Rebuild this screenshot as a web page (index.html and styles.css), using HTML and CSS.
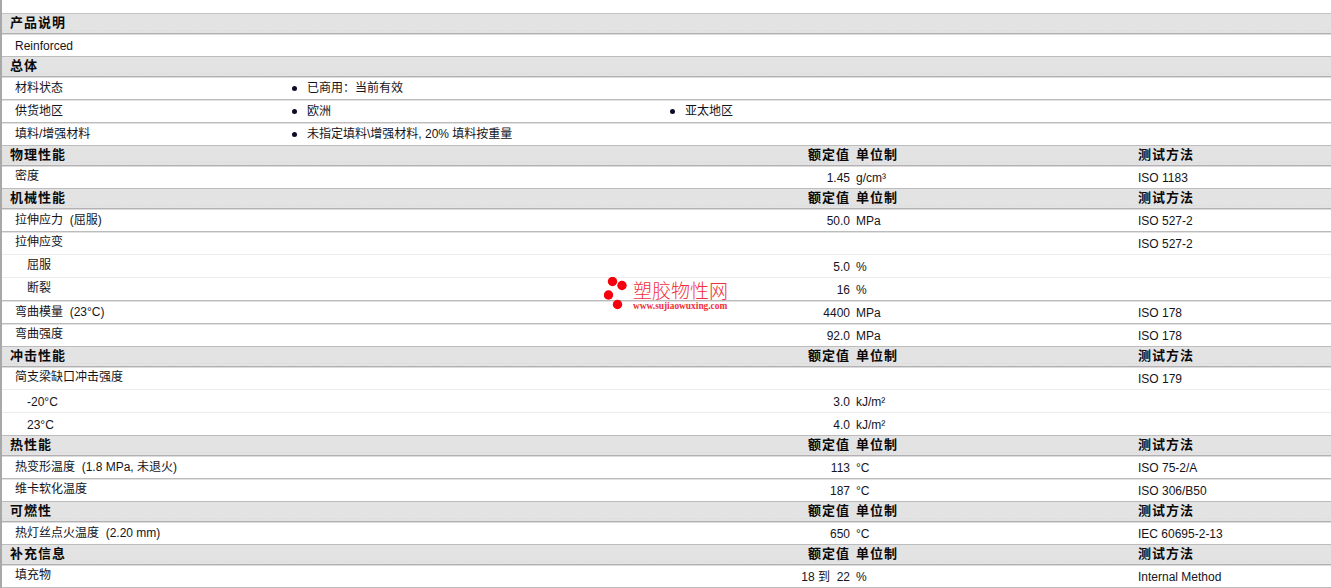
FILE: index.html
```html
<!DOCTYPE html>
<html lang="zh">
<head>
<meta charset="utf-8">
<title>产品说明</title>
<link rel="stylesheet" href="styles.css">
</head>
<body>
<div class="sheet">
  <div class="head"><b>产品说明</b></div>
  <div class="row"><span class="name num">Reinforced</span></div>
  <div class="head"><b>总体</b></div>
  <div class="row list"><span class="name mix">材料状态</span><span class="item">已商用：当前有效</span></div>
  <div class="row list"><span class="name mix">供货地区</span><span class="item">欧洲</span><span class="item">亚太地区</span></div>
  <div class="row list"><span class="name mix">填料/增强材料</span><span class="item">未指定填料\增强材料, 20% 填料按重量</span></div>

  <div class="head cols"><b>物理性能</b><b class="val">额定值</b><b class="unit">单位制</b><b>测试方法</b></div>
  <div class="row cols"><span class="name">密度</span><span class="val">1.45</span><span class="unit">g/cm³</span><span>ISO 1183</span></div>

  <div class="head cols"><b>机械性能</b><b class="val">额定值</b><b class="unit">单位制</b><b>测试方法</b></div>
  <div class="row cols"><span class="name mix">拉伸应力&nbsp; (屈服)</span><span class="val">50.0</span><span class="unit">MPa</span><span>ISO 527-2</span></div>
  <div class="row cols light"><span class="name">拉伸应变</span><span class="val"></span><span class="unit"></span><span>ISO 527-2</span></div>
  <div class="row cols light"><span class="name sub">屈服</span><span class="val">5.0</span><span class="unit">%</span><span></span></div>
  <div class="row cols"><span class="name sub">断裂</span><span class="val">16</span><span class="unit">%</span><span></span></div>
  <div class="row cols"><span class="name mix">弯曲模量&nbsp; (23°C)</span><span class="val">4400</span><span class="unit">MPa</span><span>ISO 178</span></div>
  <div class="row cols"><span class="name">弯曲强度</span><span class="val">92.0</span><span class="unit">MPa</span><span>ISO 178</span></div>

  <div class="head cols"><b>冲击性能</b><b class="val">额定值</b><b class="unit">单位制</b><b>测试方法</b></div>
  <div class="row cols light"><span class="name">简支梁缺口冲击强度</span><span class="val"></span><span class="unit"></span><span>ISO 179</span></div>
  <div class="row cols light"><span class="name sub num">-20°C</span><span class="val">3.0</span><span class="unit">kJ/m²</span><span></span></div>
  <div class="row cols"><span class="name sub num">23°C</span><span class="val">4.0</span><span class="unit">kJ/m²</span><span></span></div>

  <div class="head cols"><b>热性能</b><b class="val">额定值</b><b class="unit">单位制</b><b>测试方法</b></div>
  <div class="row cols"><span class="name mix">热变形温度&nbsp; (1.8 MPa, 未退火)</span><span class="val">113</span><span class="unit">°C</span><span>ISO 75-2/A</span></div>
  <div class="row cols"><span class="name">维卡软化温度</span><span class="val">187</span><span class="unit">°C</span><span>ISO 306/B50</span></div>

  <div class="head cols"><b>可燃性</b><b class="val">额定值</b><b class="unit">单位制</b><b>测试方法</b></div>
  <div class="row cols"><span class="name mix">热灯丝点火温度&nbsp; (2.20 mm)</span><span class="val">650</span><span class="unit">°C</span><span>IEC 60695-2-13</span></div>

  <div class="head cols"><b>补充信息</b><b class="val">额定值</b><b class="unit">单位制</b><b>测试方法</b></div>
  <div class="row cols"><span class="name">填充物</span><span class="val">18 到&nbsp; 22</span><span class="unit">%</span><span>Internal Method</span></div>
</div>
<div class="logo">
  <svg class="dots" width="26" height="34" viewBox="0 0 26 34" aria-hidden="true">
    <circle cx="8.5" cy="4.5" r="4.7"/><circle cx="18" cy="8.5" r="4.7"/><circle cx="4.5" cy="18" r="4.7"/><circle cx="13.5" cy="27.5" r="4.7"/>
  </svg>
  <div class="logo-text"><span class="logo-cn">塑胶物性网</span><span class="logo-url">www.sujiaowuxing.com</span></div>
</div>
</body>
</html>
```
FILE: styles.css
```css
* { box-sizing: border-box; }
html, body { margin: 0; padding: 0; background: #fff; }
body {
  width: 1331px;
  height: 588px;
  overflow: hidden;
  position: relative;
  font-family: "Liberation Sans", "Noto Sans CJK SC", sans-serif;
  font-size: 12px;
  color: #14141c;
}
.sheet {
  padding-top: 13px;
  border-left: 2px solid #a8a8a8;
  height: 588px;
}
.head {
  height: 20px;
  background-color: #e4e3e3;
  background-image: repeating-linear-gradient(90deg, #d6d6d6 0 1px, transparent 1px 3px);
  background-size: 100% 1px;
  background-position: 0 16px;
  background-repeat: no-repeat;
  border-bottom: 1px solid #b2b0b2;
  box-shadow: 0 1px 0 #dcdcdc;
  padding-left: 8px;
  font-size: 13px;
  letter-spacing: 1px;
  line-height: 18px;
  color: #0a0a0a;
  white-space: nowrap;
}
.sheet > .head:first-child {
  height: 21px;
  border-top: 1px solid #c4c4c4;
  background-position: 0 16px;
}
.head b { font-weight: 700; }
.row {
  height: 23px;
  border-bottom: 1px solid #bcbcbc;
  box-shadow: 0 1px 0 #e2e2e2;
  padding-left: 13px;
  line-height: 24px;
  white-space: nowrap;
}
.row.light { border-bottom: 1px solid #ececec; box-shadow: none; }
.cols { display: grid; grid-template-columns: 765px 70px 288px 1fr; }
.head.cols { grid-template-columns: 770px 70px 288px 1fr; }
.val { text-align: right; }
.unit { padding-left: 6px; }
.name { line-height: 20px; }
.name.mix { line-height: 22px; }
.name.num { line-height: 24px; }
.sub { padding-left: 12px; }
.list { display: grid; grid-template-columns: 276px 378px 1fr; line-height: 22px; }
.item { display: flex; align-items: center; gap: 11px; height: 22px; }
.item::before {
  content: "";
  width: 5px;
  height: 5px;
  margin-left: 1px;
  margin-right: -1px;
  border-radius: 50%;
  background: #0c0c2a;
}
.logo {
  position: absolute;
  left: 604px;
  top: 277px;
  display: flex;
  align-items: flex-start;
  gap: 3px;
  color: #f0303a;
}
.dots { fill: #f5000c; flex: none; }
.logo-text { display: flex; flex-direction: column; padding-top: 5px; }
.logo-cn { font-size: 19px; line-height: 20px; font-weight: 300; }
.logo-url { font-family: "Liberation Serif", serif; font-size: 9.4px; font-weight: 700; line-height: 8px; white-space: nowrap; }
```
